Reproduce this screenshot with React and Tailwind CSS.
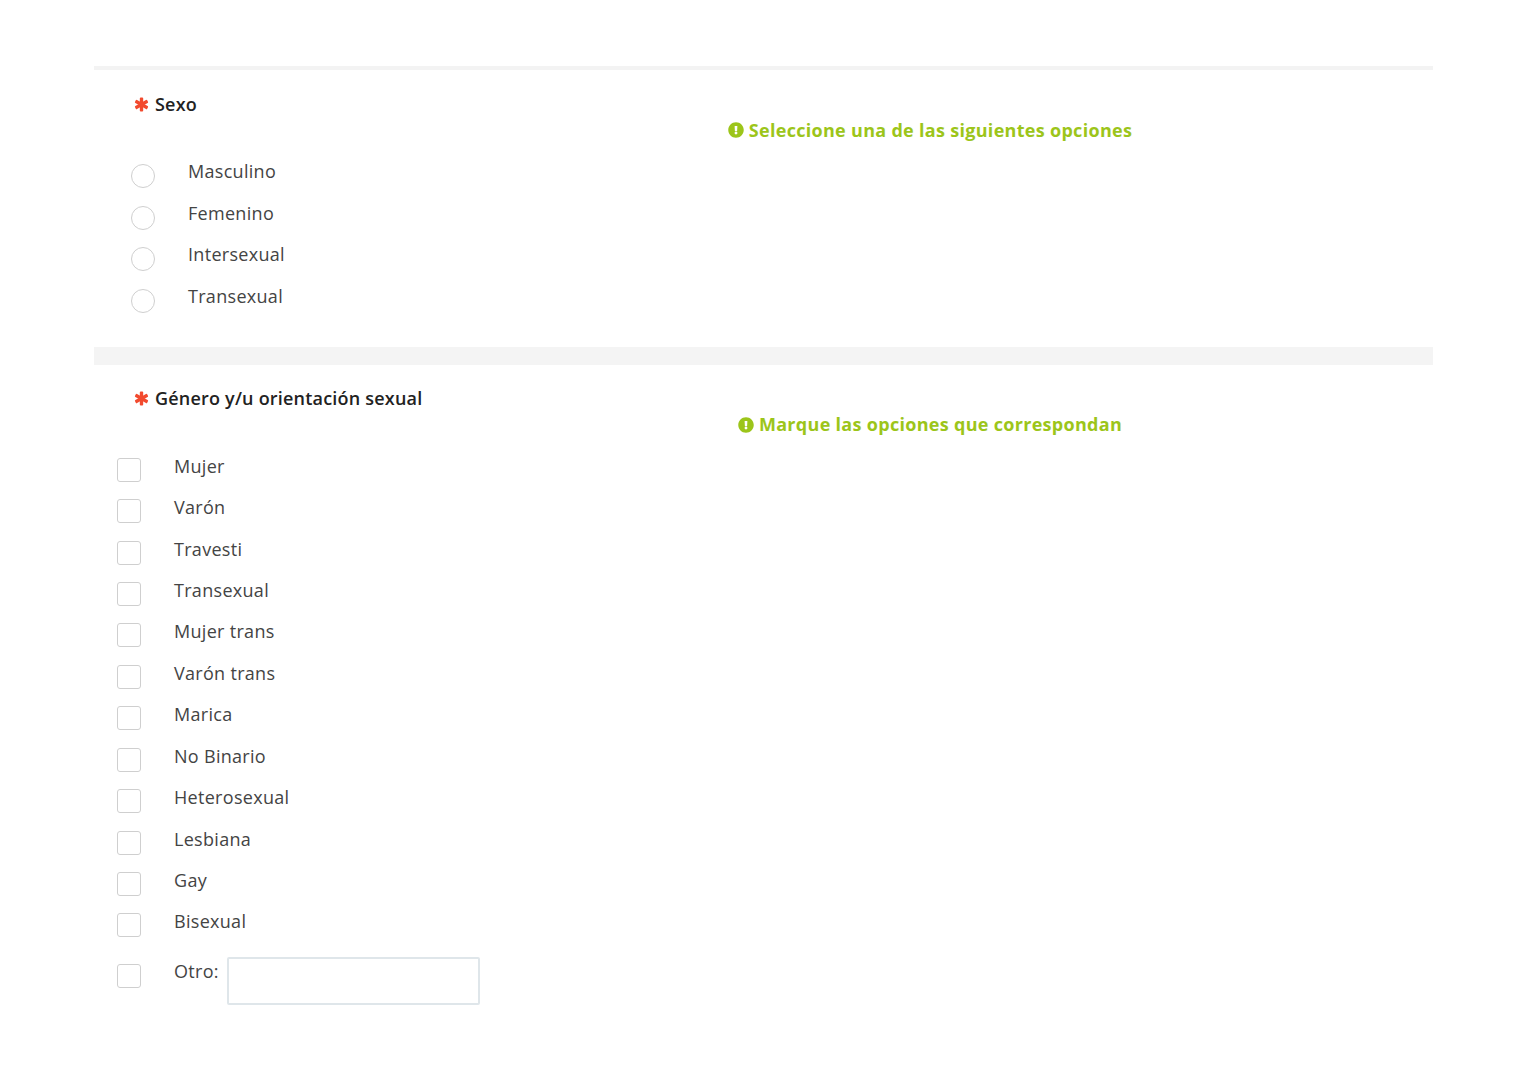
import React, { useState } from 'react';
import { FaExclamationCircle } from 'react-icons/fa';

const sexos = ['Masculino', 'Femenino', 'Intersexual', 'Transexual'];
const generos = [
  'Mujer',
  'Varón',
  'Travesti',
  'Transexual',
  'Mujer trans',
  'Varón trans',
  'Marica',
  'No Binario',
  'Heterosexual',
  'Lesbiana',
  'Gay',
  'Bisexual',
];

function Asterisk() {
  return (
    <svg viewBox="0 0 16 16" className="w-[15px] h-[15px] mr-[6px]">
      <g fill="#f24a2e">
        <rect x="6.2" y="0.5" width="3.6" height="15" rx="1" />
        <rect x="6.2" y="0.5" width="3.6" height="15" rx="1" transform="rotate(60 8 8)" />
        <rect x="6.2" y="0.5" width="3.6" height="15" rx="1" transform="rotate(120 8 8)" />
      </g>
    </svg>
  );
}

function Title({ children }) {
  return (
    <div className="flex items-center h-6 pl-[40px]">
      <Asterisk />
      <span className="text-[18px] font-semibold text-[#222] tracking-[0.2px]">{children}</span>
    </div>
  );
}

function Hint({ children }) {
  return (
    <div className="mt-[2px] pl-[333px] flex justify-center items-center h-6 text-[18px] font-bold text-[#9cc51a] tracking-[0.3px]">
      <FaExclamationCircle className="w-4 h-4 mr-[5px]" />
      <span>{children}</span>
    </div>
  );
}

export default function App() {
  const [sexo, setSexo] = useState('');
  const [checked, setChecked] = useState({});
  const [otro, setOtro] = useState('');

  const toggle = (k) => setChecked((c) => ({ ...c, [k]: !c[k] }));

  return (
    <div className="min-h-screen bg-white pt-[66px] font-['Open_Sans',sans-serif]">
      <div className="ml-[94px] w-[1339px]">
        <div className="h-[4px] bg-[#f3f3f3]" />

        <section className="pt-[22px] pb-[21px]">
          <Title>Sexo</Title>
          <Hint>Seleccione una de las siguientes opciones</Hint>
          <div className="mt-[17px] pl-[37px]">
            {sexos.map((s) => (
              <label key={s} className="flex items-start h-[41.67px] cursor-pointer">
                <span
                  onClick={() => setSexo(s)}
                  className="mt-[5px] w-6 h-6 rounded-full border-[1.5px] border-[#cfcfcf] flex items-center justify-center"
                >
                  {sexo === s && <span className="w-3 h-3 rounded-full bg-[#9cc51a]" />}
                </span>
                <span className="ml-[33px] text-[18px] leading-6 text-[#444] tracking-[0.3px]">{s}</span>
              </label>
            ))}
          </div>
        </section>

        <div className="h-[18px] bg-[#f4f4f4]" />

        <section className="pt-[22px] pb-[60px]">
          <Title>Género y/u orientación sexual</Title>
          <Hint>Marque las opciones que correspondan</Hint>
          <div className="mt-[17px] pl-[23px]">
            {generos.map((g) => (
              <label key={g} className="flex items-start h-[41.45px] cursor-pointer">
                <span
                  onClick={() => toggle(g)}
                  className="mt-[4px] w-6 h-6 rounded-[3px] border-[1.5px] border-[#cfcfcf] flex items-center justify-center text-[#9cc51a] text-sm"
                >
                  {checked[g] && '✓'}
                </span>
                <span className="ml-[33px] text-[18px] leading-6 text-[#444] tracking-[0.3px]">{g}</span>
              </label>
            ))}
            <div className="flex items-start mt-[8px]">
              <span
                onClick={() => toggle('otro')}
                className="mt-[5px] w-6 h-6 rounded-[3px] border-[1.5px] border-[#cfcfcf] flex items-center justify-center text-[#9cc51a] text-sm cursor-pointer"
              >
                {checked.otro && '✓'}
              </span>
              <span className="ml-[33px] text-[18px] leading-6 text-[#444] tracking-[0.3px]">Otro:</span>
              <input
                value={otro}
                onChange={(e) => setOtro(e.target.value)}
                className="ml-[8px] -mt-[2px] w-[253px] h-[48px] border-2 border-[#dfe6ea] rounded-[2px] px-2 text-[16px] text-[#333] focus:outline-none"
              />
            </div>
          </div>
        </section>
      </div>
    </div>
  );
}
